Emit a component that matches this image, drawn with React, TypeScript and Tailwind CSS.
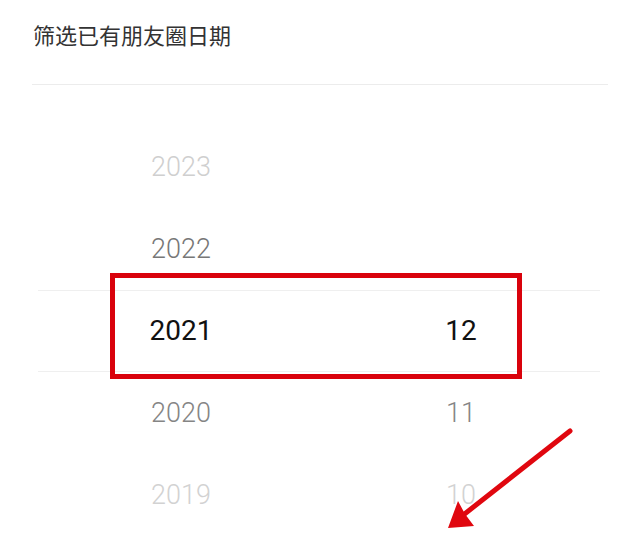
import React from 'react';

type Row = { year: string; month?: string; tone: string; selected?: boolean };

const rows: Row[] = [
  { year: '2023', tone: 'text-[#cfcfcf]' },
  { year: '2022', tone: 'text-[#777777]' },
  { year: '2021', month: '12', tone: 'text-[#111111]', selected: true },
  { year: '2020', month: '11', tone: 'text-[#858585]' },
  { year: '2019', month: '10', tone: 'text-[#d2d2d2]' },
];

const App: React.FC = () => {
  return (
    <div className="relative w-[640px] h-[544px] overflow-hidden bg-white font-['Roboto','Noto_Sans_CJK_SC',sans-serif]">
      {/* Title */}
      <div className="h-[84px] px-[33px] pt-[18px]">
        <div className="text-[22px] leading-[32px] text-[#333333] font-['Noto_Sans_CJK_SC',sans-serif]">筛选已有朋友圈日期</div>
      </div>
      <div className="mx-[32px] border-t border-[#ececec]" />

      {/* Picker */}
      <div className="pt-[41px]">
        {rows.map(r => (
          <div
            key={r.year}
            className={`mx-[38px] w-[562px] h-[82px] flex items-center ${r.tone} ${
              r.selected ? 'border-y border-[#efefef] text-[28px]' : 'text-[27px] font-light'
            }`}
          >
            <div className="w-[286px] text-center">{r.year}</div>
            <div className="w-[274px] text-center">{r.month ?? ''}</div>
          </div>
        ))}
      </div>

      {/* Highlight box */}
      <div className="absolute left-[110px] top-[273px] w-[412px] h-[106px] border-[5px] border-[#d9020c]" />

      {/* Arrow */}
      <svg className="absolute inset-0 pointer-events-none" width="640" height="544" viewBox="0 0 640 544">
        <line x1="570" y1="431" x2="462" y2="516" stroke="#e0070f" strokeWidth="5" strokeLinecap="round" />
        <polygon points="448,528 458,501 465,514 474,526" fill="#e0070f" />
      </svg>
    </div>
  );
};

export default App;
